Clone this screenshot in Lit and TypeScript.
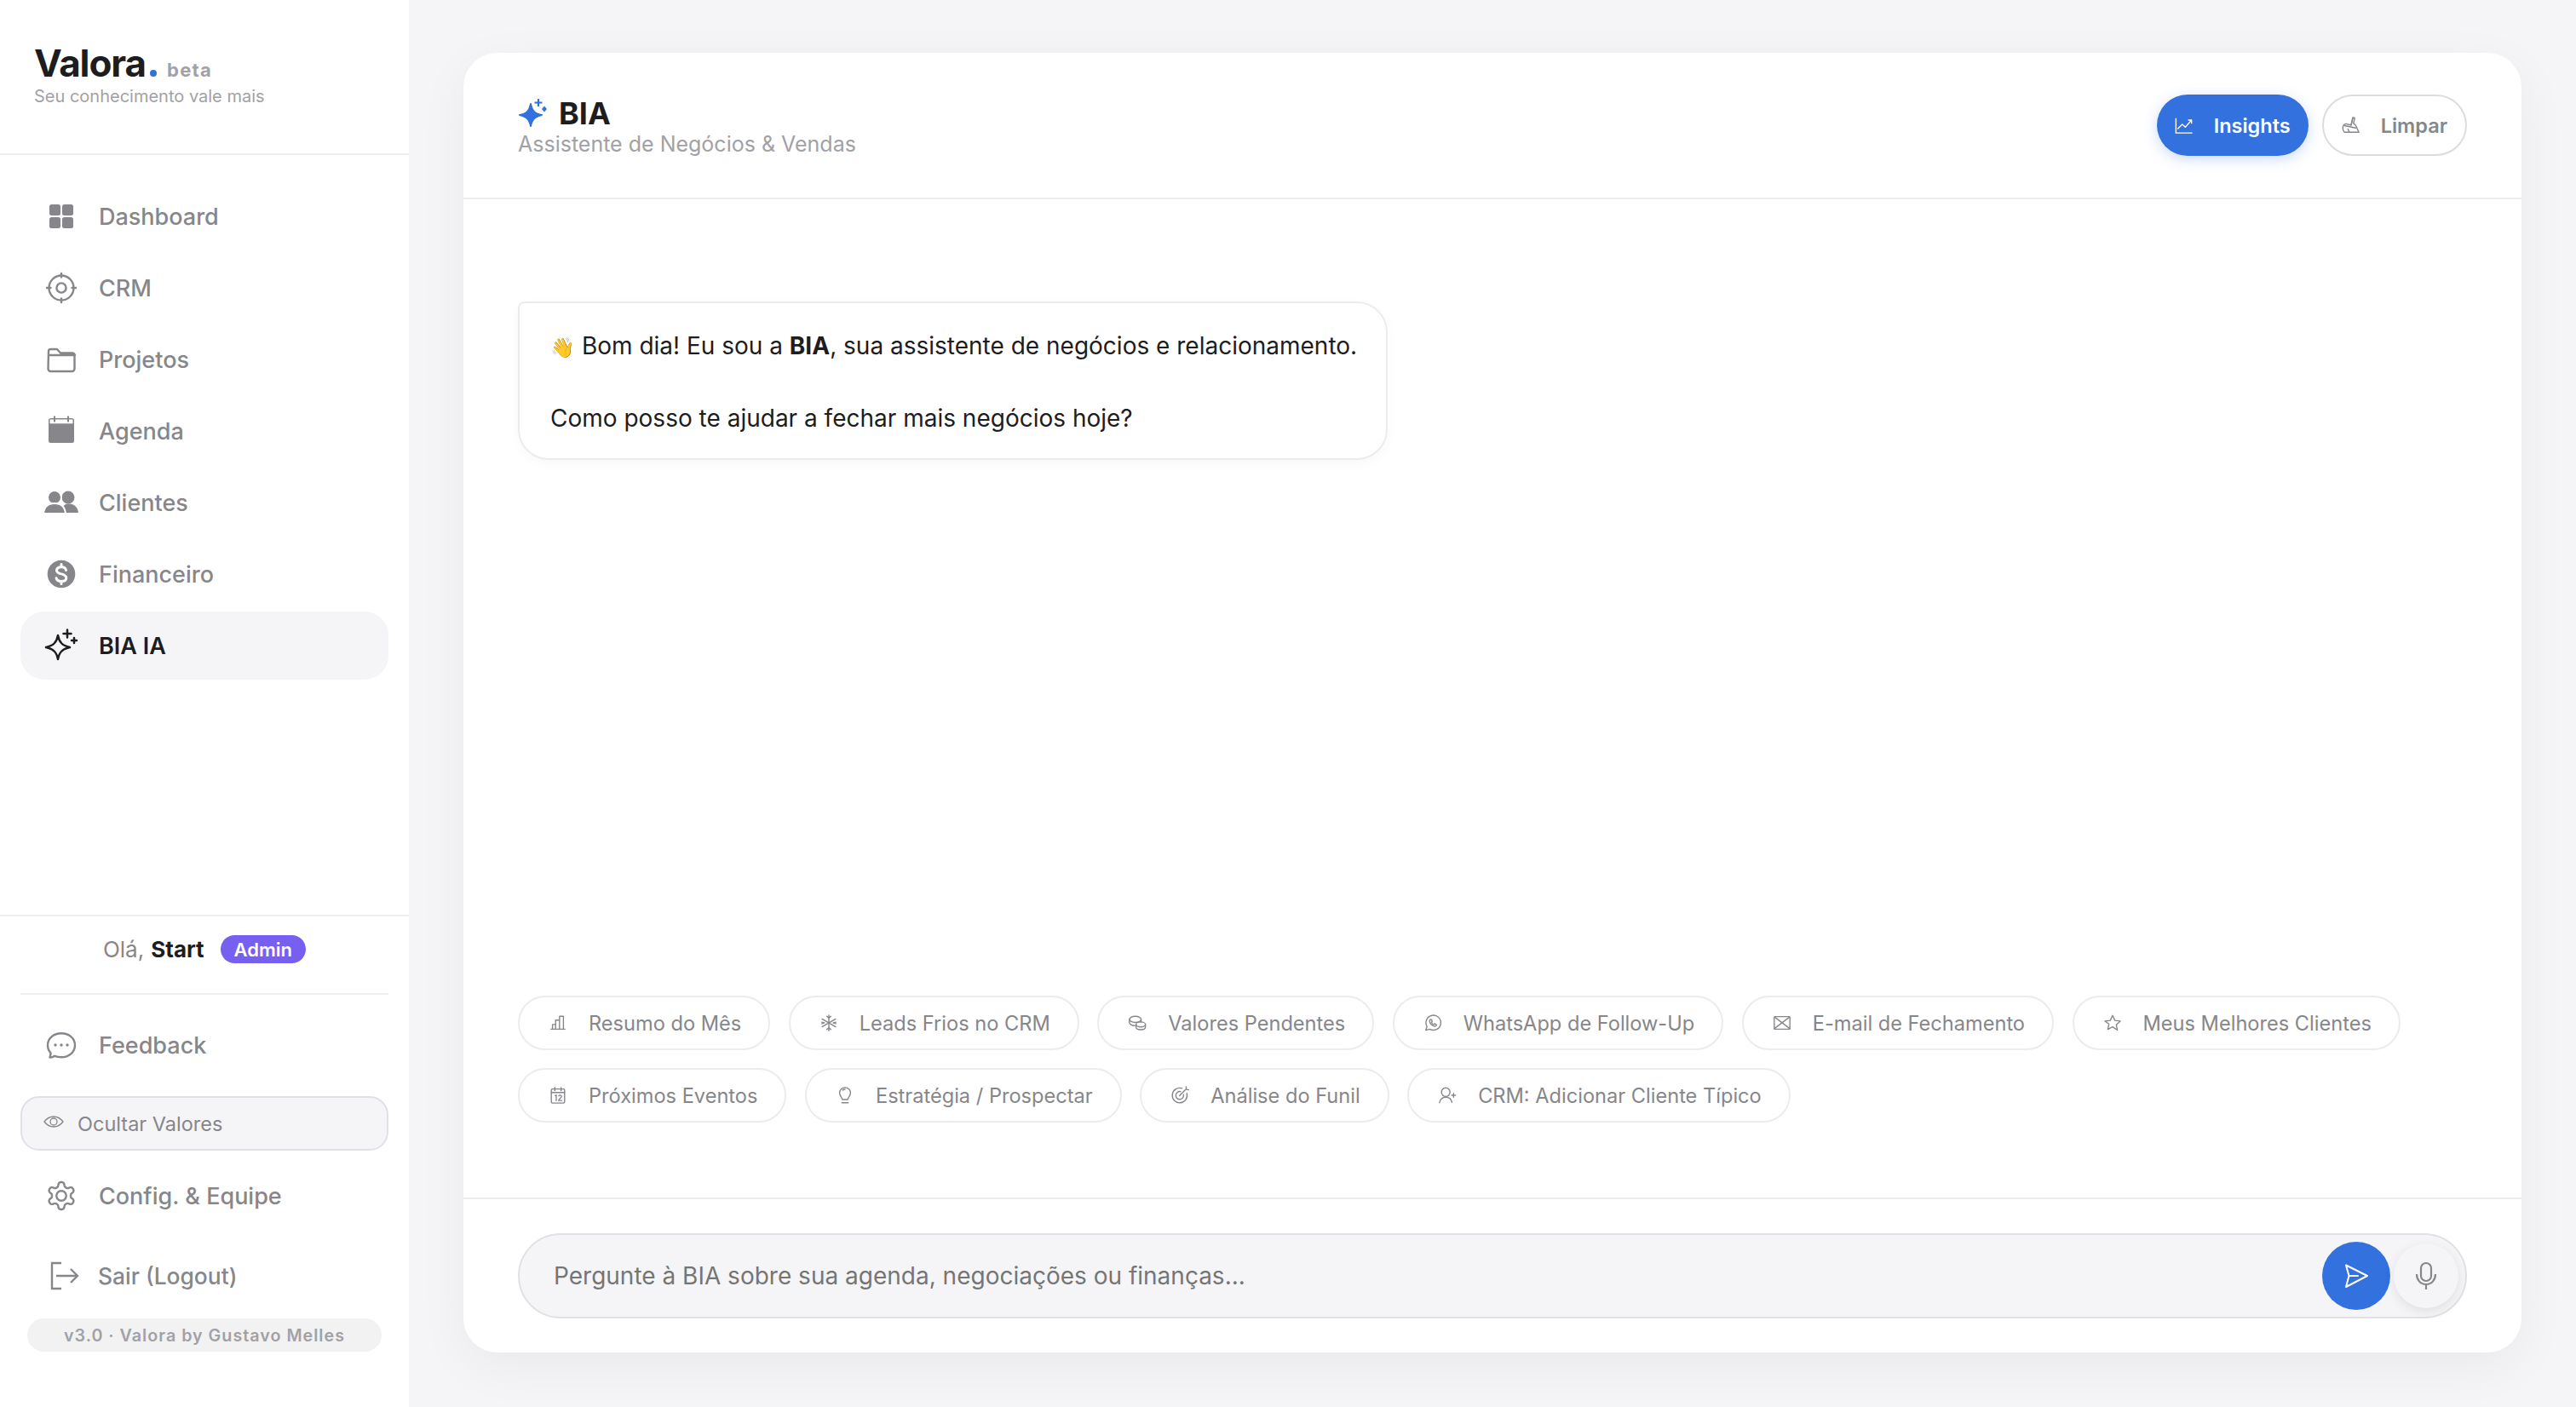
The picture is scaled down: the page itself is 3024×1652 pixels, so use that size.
import { LitElement, html, css, svg } from "lit";
import { customElement } from "lit/decorators.js";

const ico = (vb: string, body: unknown, cls = "ic") =>
  html`<svg class=${cls} viewBox=${vb} fill="none" stroke="currentColor" stroke-linecap="round" stroke-linejoin="round">${body}</svg>`;

const nav = [
  { label: "Dashboard", icon: ico("0 0 48 48", svg`<g fill="currentColor" stroke="none"><rect x="10" y="10" width="13" height="13" rx="2.5"/><rect x="25" y="10" width="13" height="13" rx="2.5"/><rect x="10" y="25" width="13" height="13" rx="2.5"/><rect x="25" y="25" width="13" height="13" rx="2.5"/></g>`) },
  { label: "CRM", icon: ico("0 0 48 48", svg`<g stroke-width="2.4"><circle cx="24" cy="24" r="14.5"/><circle cx="24" cy="24" r="5.6"/><path d="M24 7v4.5M24 36.500v4.500M7 24h4.500M36.500 24H41"/></g>`) },
  { label: "Projetos", icon: ico("0 0 48 48", svg`<path stroke-width="2.4" d="M9 14.500a2.500 2.500 0 0 1 2.500-2.500h7.500l4 4.500h14a2.500 2.500 0 0 1 2.500 2.500v16a3 3 0 0 1-3 3h-25a3 3 0 0 1-3-3zM9 19h31"/>`) },
  { label: "Agenda", icon: html`<svg class="ic" viewBox="0 0 48 48"><rect x="9" y="9" width="30" height="29" rx="2.500" fill="currentColor"/><rect x="10.500" y="10.500" width="27" height="4.800" fill="#fff"/><path d="M16 6.500v7M32 6.500v7" stroke="currentColor" stroke-width="2"/></svg>` },
  { label: "Clientes", icon: html`<svg class="ic" viewBox="0 0 48 48" fill="currentColor"><circle cx="32" cy="18" r="7.500"/><path d="M24 36C25 28 28 25.500 32 25.500C38 25.500 43 28 44 36Z"/><g stroke="#fff" stroke-width="2"><circle cx="16" cy="18" r="8"/><path d="M3 37C4 28 10 25 16 25C22 25 28 28 29 37Z"/></g></svg>` },
  { label: "Financeiro", icon: html`<svg class="ic" viewBox="0 0 48 48"><circle cx="24" cy="24" r="16.300" fill="currentColor"/><path d="M29.500 19.500c-.3-2.400-2.500-3.800-5.500-3.800-3.200 0-5.500 1.600-5.500 4 0 5.600 11.300 2.800 11.300 8.800 0 2.600-2.500 4-5.800 4-3.200 0-5.600-1.500-5.900-3.800M24 12.500v3.200M24 32.500v3" stroke="#fff" stroke-width="3" fill="none" stroke-linecap="round"/></svg>` },
  { label: "BIA IA", active: true, icon: ico("0 0 48 48", svg`<g stroke-width="2.500"><path d="M20 12C21.500 20 25 24 34 26C25 28 21.500 32 20 40C18.500 32 15 28 6 26C15 24 18.500 20 20 12Z"/><path d="M31 5.500v9M26.500 10h9M39 15v6M36 18h6"/></g>`) },
];

const chips1 = [
  { t: "Resumo do Mês", i: svg`<path d="M3 20h18M5 20v-6h4v6M9 20V8.500h5V20M14 20V3.500h5V20"/>` },
  { t: "Leads Frios no CRM", i: svg`<path d="M12 2v20M3.300 7l17.400 10M3.300 17l17.400-10M9.500 3.500 12 6l2.500-2.500M9.500 20.500 12 18l2.500 2.500M3 11l3.300 1L3 13M21 11l-3.300 1 3.300 1"/>` },
  { t: "Valores Pendentes", i: svg`<ellipse cx="9.500" cy="7.500" rx="7.500" ry="4"/><path d="M2 7.500v4c0 2 3 4 7 4M17 7.500V11"/><ellipse cx="16.500" cy="14" rx="6" ry="3.200"/><path d="M10.500 14v3.500c0 1.800 2.700 3.200 6 3.200s6-1.400 6-3.200V14"/>` },
  { t: "WhatsApp de Follow-Up", i: svg`<path d="M3 21.500l1.500-5A9.500 9.500 0 1 1 8 20z"/><path d="M9 7.500c-1 .7-1.400 1.800-1 3.200 1 3 3 4.800 5.800 5.600 1.300.3 2.400-.2 2.900-1.300l-.3-1-2.200-1-1 1.100c-1.400-.6-2.300-1.500-3-3l1-1.100-.9-2.300z"/>` },
  { t: "E-mail de Fechamento", i: svg`<rect x="2" y="4" width="20" height="16" rx="1"/><path d="M2.500 4.500 22 19.500M21.500 4.500 2 19.500"/>` },
  { t: "Meus Melhores Clientes", i: svg`<path d="M12 2.500l2.900 6.400 6.900.8-5.100 4.700 1.400 6.900L12 17l-6.100 3.300 1.400-6.900L2.200 9.700l6.900-.8z"/>` },
];
const chips2 = [
  { t: "Próximos Eventos", i: svg`<rect x="3.500" y="4" width="17" height="18" rx="1.500"/><path d="M3.500 8.500h17M8 2v4M16 2v4M8.500 12.500l1.300-.8v7M13 12.800c.6-1.400 3.600-1.400 3.600.6 0 1.800-3.600 3.200-3.800 5.300h4"/>` },
  { t: "Estratégia / Prospectar", i: svg`<path d="M8.500 17.500c0-2.500-3.500-4.500-3.500-8.500a7 7 0 0 1 14 0c0 4-3.500 6-3.500 8.500zM8 21.500h8M9 5.500c1-1 2-1.200 3-1.200"/>` },
  { t: "Análise do Funil", i: svg`<path d="M14.500 3A9.500 9.500 0 1 0 21 9.500"/><path d="M13 7.300A5 5 0 1 0 16.700 11"/><path d="M11.500 12.500 20 4M20 1l.5 3.500L24 5"/>` },
  { t: "CRM: Adicionar Cliente Típico", i: svg`<circle cx="10" cy="8" r="5.500"/><path d="M2 21.500c1-4.500 3.700-7 8-7s7 2.500 8 6.500M20 9.500v5M17.500 12h5"/>` },
];

@customElement("app-root")
export class AppRoot extends LitElement {
  static styles = css`
    :host { display: flex; width: 100vw; height: 100vh; overflow: hidden; background: #f5f5f7; color: #1d1d1f; font-family: Inter, "Noto Sans", sans-serif; }
    * { box-sizing: border-box; }
    .ic { width: 48px; height: 48px; flex: none; display: block; }
    .side { width: 480px; flex: none; background: #fff; display: flex; flex-direction: column; }
    .brand { height: 182px; padding: 51px 40px 0; border-bottom: 2px solid #eeeeef; }
    .logo { display: flex; align-items: baseline; height: 46px; }
    .logo b { font-size: 44px; font-weight: 700; letter-spacing: -1.100px; line-height: 46px; }
    .logo i { width: 8px; height: 8px; border-radius: 50%; background: #3271de; margin: 0 12px 0 5px; }
    .logo span { font-size: 22px; font-weight: 700; letter-spacing: 1.300px; color: #a1a1a6; }
    .tag { font-size: 20px; color: #a1a1a6; margin-top: 3px; line-height: 26px; }
    .menu { flex: 1; padding: 32px 24px 0; display: flex; flex-direction: column; gap: 4px; }
    .item { height: 80px; display: flex; align-items: center; padding-left: 24px; gap: 20px; font-size: 27px; font-weight: 500; color: #86868b; border-radius: 28px; }
    .item.active { background: #f5f5f7; color: #1d1d1f; font-weight: 600; }
    .foot { border-top: 2px solid #eeeeef; padding: 0 24px; height: 578px; flex: none; display: flex; flex-direction: column; }
    .user { height: 92px; flex: none; display: flex; align-items: center; justify-content: center; font-size: 26px; color: #86868b; border-bottom: 2px solid #eeeeef; padding-bottom: 13px; }
    .user b { color: #1d1d1f; font-weight: 700; margin-left: 8px; }
    .badge { margin-left: 19px; height: 33px; padding: 0 16px; border-radius: 17px; background: #7660f0; color: #fff; font-size: 22px; font-weight: 600; display: flex; align-items: center; }
    .item.feedback { margin-top: 19px; flex: none; }
    .hide { height: 64px; flex: none; margin-top: 20px; border: 2px solid #e1e1e5; border-radius: 22px; background: #f5f5f7; display: flex; align-items: center; gap: 16px; padding-left: 25px; font-size: 23.500px; color: #86868b; }
    .hide .ic { width: 24px; height: 24px; margin-bottom: 4px; }
    .item.config { margin-top: 13px; flex: none; }
    .item.logout { flex: none; margin-top: 14px; padding-left: 27px; gap: 16px; font-size: 26.400px; }
    .ver { margin: 10px 8px 0; height: 39px; flex: none; border-radius: 20px; background: #f2f2f3; color: #a1a1a6; font-size: 19.700px; font-weight: 600; letter-spacing: 1px; display: flex; align-items: center; justify-content: center; }
    .main { flex: 1; padding: 62px 64px 64px; min-width: 0; }
    .card { height: 100%; background: #fff; border-radius: 40px; box-shadow: 0 16px 60px rgba(0,0,0,.05); display: flex; flex-direction: column; overflow: hidden; }
    .head { height: 172px; flex: none; border-bottom: 2px solid #ececee; padding: 0 64px; display: flex; align-items: center; justify-content: space-between; }
    .title { display: flex; align-items: center; gap: 14px; font-size: 36px; font-weight: 700; line-height: 44px; margin: 2px 0 -2px; }
    .title svg { width: 34px; height: 34px; color: #3271de; margin-top: -3px; }
    .sub { font-size: 25px; line-height: 32px; color: #a1a1a6; }
    .acts { display: flex; gap: 16px; }
    .btn { height: 72px; border-radius: 36px; display: flex; align-items: center; padding: 0 21px; gap: 24px; font-size: 23.500px; font-weight: 600; }
    .btn .ic { width: 22px; height: 22px; }
    .btn.pri { background: #3271de; color: #fff; box-shadow: 0 4px 16px rgba(50,113,222,.25); }
    .btn.sec { border: 2px solid #dcdcde; color: #86868b; padding: 0 21px; }
    .msgs { flex: 1; padding: 120px 64px 0; }
    .bubble { width: 1021px; height: 186px; border: 2px solid #ececee; border-radius: 8px 36px 36px 36px; box-shadow: 0 4px 14px rgba(0,0,0,.03); padding: 30px 36px; font-size: 28px; line-height: 41.500px; white-space: nowrap; }
    .bubble b { font-weight: 700; }
    .wave { font-size: 23px; }
    .chips { padding: 0 64px 88px; display: flex; flex-direction: column; gap: 21px; }
    .row { display: flex; gap: 21.500px; }
    .chip { height: 64px; border: 2px solid #ececee; border-radius: 32px; display: flex; align-items: center; padding: 0 32px 0 34px; gap: 25px; font-size: 23.600px; color: #86868b; white-space: nowrap; }
    .chip svg { width: 22px; height: 22px; flex: none; stroke-width: 1.500; }
    .bar { flex: none; height: 182px; border-top: 2px solid #ececee; padding: 40px 64px; }
    .input { height: 100px; border: 2px solid #e1e1e5; border-radius: 50px; background: #f5f5f7; display: flex; align-items: center; padding: 0 8px 0 40px; }
    .input input { flex: 1; min-width: 0; border: 0; outline: 0; background: none; font: inherit; font-size: 28px; color: #1d1d1f; padding: 0; }
    .send { width: 80px; height: 80px; border-radius: 50%; background: #3271de; color: #fff; display: flex; align-items: center; justify-content: center; }
    .send svg { width: 32px; height: 32px; }
    .mic { width: 76px; height: 76px; margin-left: 4px; border-radius: 50%; background: #f5f5f7; color: #86868b; box-shadow: 0 4px 14px rgba(0,0,0,.09); display: flex; align-items: center; justify-content: center; }
    .mic svg { width: 34px; height: 34px; }
  `;

  chip(c: { t: string; i: unknown }) {
    return html`<div class="chip"><svg viewBox="0 0 24 24" fill="none" stroke="currentColor" stroke-linecap="round" stroke-linejoin="round">${c.i}</svg>${c.t}</div>`;
  }

  render() {
    return html`
      <aside class="side">
        <div class="brand">
          <div class="logo"><b>Valora</b><i></i><span>beta</span></div>
          <div class="tag">Seu conhecimento vale mais</div>
        </div>
        <nav class="menu">
          ${nav.map((n) => html`<div class="item ${n.active ? "active" : ""}">${n.icon}${n.label}</div>`)}
        </nav>
        <div class="foot">
          <div class="user">Olá,<b>Start</b><span class="badge">Admin</span></div>
          <div class="item feedback">
            ${ico("0 0 48 48", svg`<g stroke-width="2.400"><path d="M10.500 38.500c1.500.2 4-.5 5.600-1.700 2.200.9 5 1.400 7.900 1.400 8.800 0 16-5.700 16-14s-7.200-14-16-14-16 5.700-16 14c0 3.500 1.300 6.600 3.500 9 .3 2-.8 4-1 5.300z"/></g><g fill="currentColor" stroke="none"><circle cx="17" cy="24" r="1.700"/><circle cx="24" cy="24" r="1.700"/><circle cx="31" cy="24" r="1.700"/></g>`)}
            Feedback
          </div>
          <div class="hide">
            ${ico("0 0 24 24", svg`<g stroke-width="1.300"><path d="M1 12c3-4 6.500-6 11-6s8 2 11 6c-3 4-6.500 6-11 6s-8-2-11-6z"/><circle cx="12" cy="12" r="4"/></g>`)}
            Ocultar Valores
          </div>
          <div class="item config">
            ${ico("-3 -3 30 30", svg`<g stroke-width="1.500"><path d="M12.220 2h-.44a2 2 0 0 0-2 2v.18a2 2 0 0 1-1 1.730l-.43.25a2 2 0 0 1-2 0l-.15-.08a2 2 0 0 0-2.730.73l-.22.38a2 2 0 0 0 .73 2.730l.15.100a2 2 0 0 1 1 1.720v.51a2 2 0 0 1-1 1.740l-.15.09a2 2 0 0 0-.73 2.730l.22.38a2 2 0 0 0 2.730.73l.15-.08a2 2 0 0 1 2 0l.43.25a2 2 0 0 1 1 1.730V20a2 2 0 0 0 2 2h.44a2 2 0 0 0 2-2v-.18a2 2 0 0 1 1-1.730l.43-.25a2 2 0 0 1 2 0l.15.08a2 2 0 0 0 2.730-.73l.22-.39a2 2 0 0 0-.73-2.730l-.15-.08a2 2 0 0 1-1-1.740v-.5a2 2 0 0 1 1-1.740l.15-.09a2 2 0 0 0 .73-2.730l-.22-.38a2 2 0 0 0-2.730-.73l-.15.08a2 2 0 0 1-2 0l-.43-.25a2 2 0 0 1-1-1.730V4a2 2 0 0 0-2-2z"/><circle cx="12" cy="12" r="3.600"/></g>`)}
            Config. &amp; Equipe
          </div>
          <div class="item logout">
            ${ico("0 0 48 48", svg`<path stroke-width="2.400" stroke-linecap="butt" d="M21 9H10v30h11M15 24h25M32 16l8 8-8 8" stroke-linejoin="miter"/>`)}
            Sair (Logout)
          </div>
          <div class="ver">v3.0 · Valora by Gustavo Melles</div>
        </div>
      </aside>
      <main class="main">
        <section class="card">
          <header class="head">
            <div>
              <div class="title">
                <svg viewBox="0 0 34 34" fill="currentColor"><path stroke="currentColor" stroke-width="2" stroke-linejoin="round" d="M15 7C16.500 15 20 19 28 20C20 22 16.500 25 15 33C13.500 25 10 22 2 20C10 19 13.500 15 15 7Z"/><path d="M24 1v9M19.500 5.500h9" stroke="currentColor" stroke-width="2.200" fill="none"/><path d="M31 9.500l3 3.500-3 3.500-3-3.500z"/></svg>
                BIA
              </div>
              <div class="sub">Assistente de Negócios &amp; Vendas</div>
            </div>
            <div class="acts">
              <div class="btn pri">
                ${ico("0 0 24 24", svg`<path stroke-width="1.500" stroke-linecap="butt" d="M1.500 3v19h21M3.500 17l6-6 4 3.500L21 6M17 5.500h4.500V10"/>`)}
                Insights
              </div>
              <div class="btn sec">
                ${ico("0 0 24 24", svg`<g stroke-width="1.500"><path d="M14.500 2.500c1.200-.8 2.300 0 2 1.200l-1.500 6 3 2.500c1 2 2 5.500 4 8.800H3.500C1 18 .8 14.500 2.500 11.500l3-1.200 6.500 1.700z"/><path d="M3.500 12.500 18 15.500M8 17l1.500 3.500M14 2.500 12 11"/></g>`)}
                Limpar
              </div>
            </div>
          </header>
          <div class="msgs">
            <div class="bubble"><span class="wave">👋</span> Bom dia! Eu sou a <b>BIA</b>, sua assistente de negócios e relacionamento.<br><br>Como posso te ajudar a fechar mais negócios hoje?</div>
          </div>
          <div class="chips">
            <div class="row">${chips1.map((c) => this.chip(c))}</div>
            <div class="row">${chips2.map((c) => this.chip(c))}</div>
          </div>
          <div class="bar">
            <div class="input">
              <input placeholder="Pergunte à BIA sobre sua agenda, negociações ou finanças...">
              <div class="send"><svg viewBox="0 0 32 32" fill="none" stroke="currentColor" stroke-width="2" stroke-linecap="round" stroke-linejoin="round"><path d="M4 3.500 29 16 4 29l3.500-13zM7.500 16H18"/></svg></div>
              <div class="mic"><svg viewBox="0 0 34 34" fill="none" stroke="currentColor" stroke-width="2.200"><rect x="11" y="2" width="12" height="21" rx="6"/><path d="M6 15c0 7 4.500 12 11 12s11-5 11-12M17 27v6"/></svg></div>
            </div>
          </div>
        </section>
      </main>
    `;
  }
}
